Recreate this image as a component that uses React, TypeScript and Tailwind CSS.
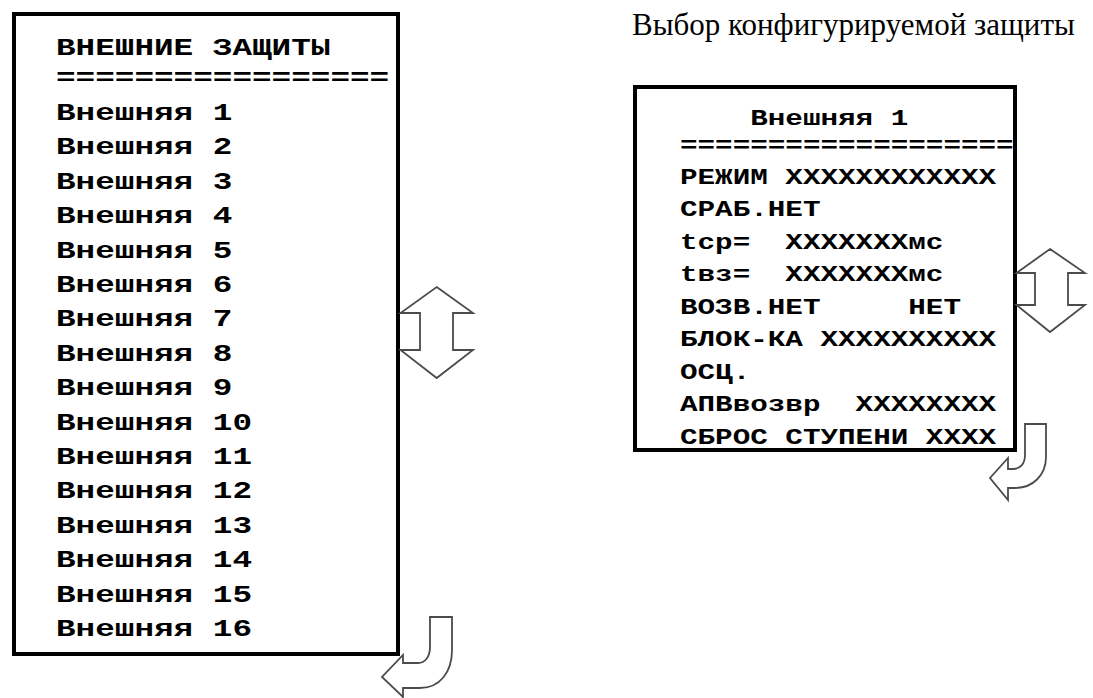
const leftRows = Array.from({ length: 16 }, (_, i) => `Внешняя ${i + 1}`);

const rightRows = [
  'РЕЖИМ XXXXXXXXXXXX',
  'СРАБ.НЕТ',
  'tср=  XXXXXXXмс',
  'tвз=  XXXXXXXмс',
  'ВОЗВ.НЕТ     НЕТ',
  'БЛОК-КА XXXXXXXXXX',
  'ОСЦ.',
  'АПВвозвр  XXXXXXXX',
  'СБРОС СТУПЕНИ XXXX',
];

// outline arrow, drawn in page coordinates through the viewBox
const Arrow = ({ d, className, viewBox }: { d: string; className: string; viewBox: string }) => (
  <svg className={className} viewBox={viewBox}>
    <path d={d} fill="white" stroke="#4b4b4b" strokeWidth="1.8" strokeLinejoin="miter" />
  </svg>
);

const mono = "font-['Courier_New','Nimbus_Mono_PS','FreeMono','Liberation_Mono',monospace] font-bold whitespace-pre";

export default function App() {
  return (
    <div className="w-[1093px] h-[698px] bg-white overflow-hidden flex items-start text-black">
      {/* left menu */}
      <div className="relative ml-[12px] mt-[12px] w-[388px] h-[644px] border-4 border-black shrink-0">
        <div className={`pl-[40px] pt-[18px] text-[23px] ${mono}`}>
          <div className="origin-left scale-x-[1.42]">
            <div className="leading-[30px]">ВНЕШНИЕ ЗАЩИТЫ</div>
            <div className="leading-[30px]">=================</div>
            <div className="mt-[3px]">
              {leftRows.map((row) => (
                <div key={row} className="leading-[34.4px]">{row}</div>
              ))}
            </div>
          </div>
        </div>
        <Arrow
          className="absolute left-[380px] top-[264px] w-[96px] h-[116px]"
          viewBox="396 280 96 116"
          d="M436.7,287 L473,313 L453,313 L453,350 L473,350 L436.7,378 L400.5,350 L420,350 L420,313 L400.5,313 Z"
        />
        <Arrow
          className="absolute left-[358px] top-[592px] w-[100px] h-[102px]"
          viewBox="374 608 100 102"
          d="M430,617 H452 V650 C452,672 440,688 420,688 H403 V697 L382,677 L403,655 V663 H418 C425,663 430,657 430,647 Z"
        />
      </div>

      {/* right column */}
      <div className="ml-[232px] flex flex-col">
        <div className="mt-[9px] leading-[32px] text-[31px] font-['Liberation_Serif',serif] whitespace-nowrap">
          Выбор конфигурируемой защиты
        </div>
        <div className="relative mt-[44px] ml-[1px] w-[384px] h-[367px] border-4 border-black">
          <div className={`pl-[43px] pt-[16.5px] text-[22px] ${mono}`}>
            <div className="origin-left scale-x-[1.33]">
              <div className="leading-[27px]">    Внешняя 1</div>
              <div className="leading-[27px]">===================</div>
              <div className="mt-[3px]">
                {rightRows.map((row) => (
                  <div key={row} className="leading-[32.5px]">{row}</div>
                ))}
              </div>
            </div>
          </div>
          <Arrow
            className="absolute left-[375px] top-[155px] w-[80px] h-[92px]"
            viewBox="1012 244 80 92"
            d="M1050,249 L1085,273 L1068,273 L1068,305 L1085,305 L1050,332 L1016.5,305 L1035,305 L1035,273 L1016.5,273 Z"
          />
          <Arrow
            className="absolute left-[345px] top-[329px] w-[70px] h-[86px]"
            viewBox="982 418 70 86"
            d="M1025,424 H1046 V457 C1046,475 1033,488 1015,488 H1008 V500 L990,478 L1008,458 V469 H1013 C1020,469 1025,464 1025,455 Z"
          />
        </div>
      </div>
    </div>
  );
}
